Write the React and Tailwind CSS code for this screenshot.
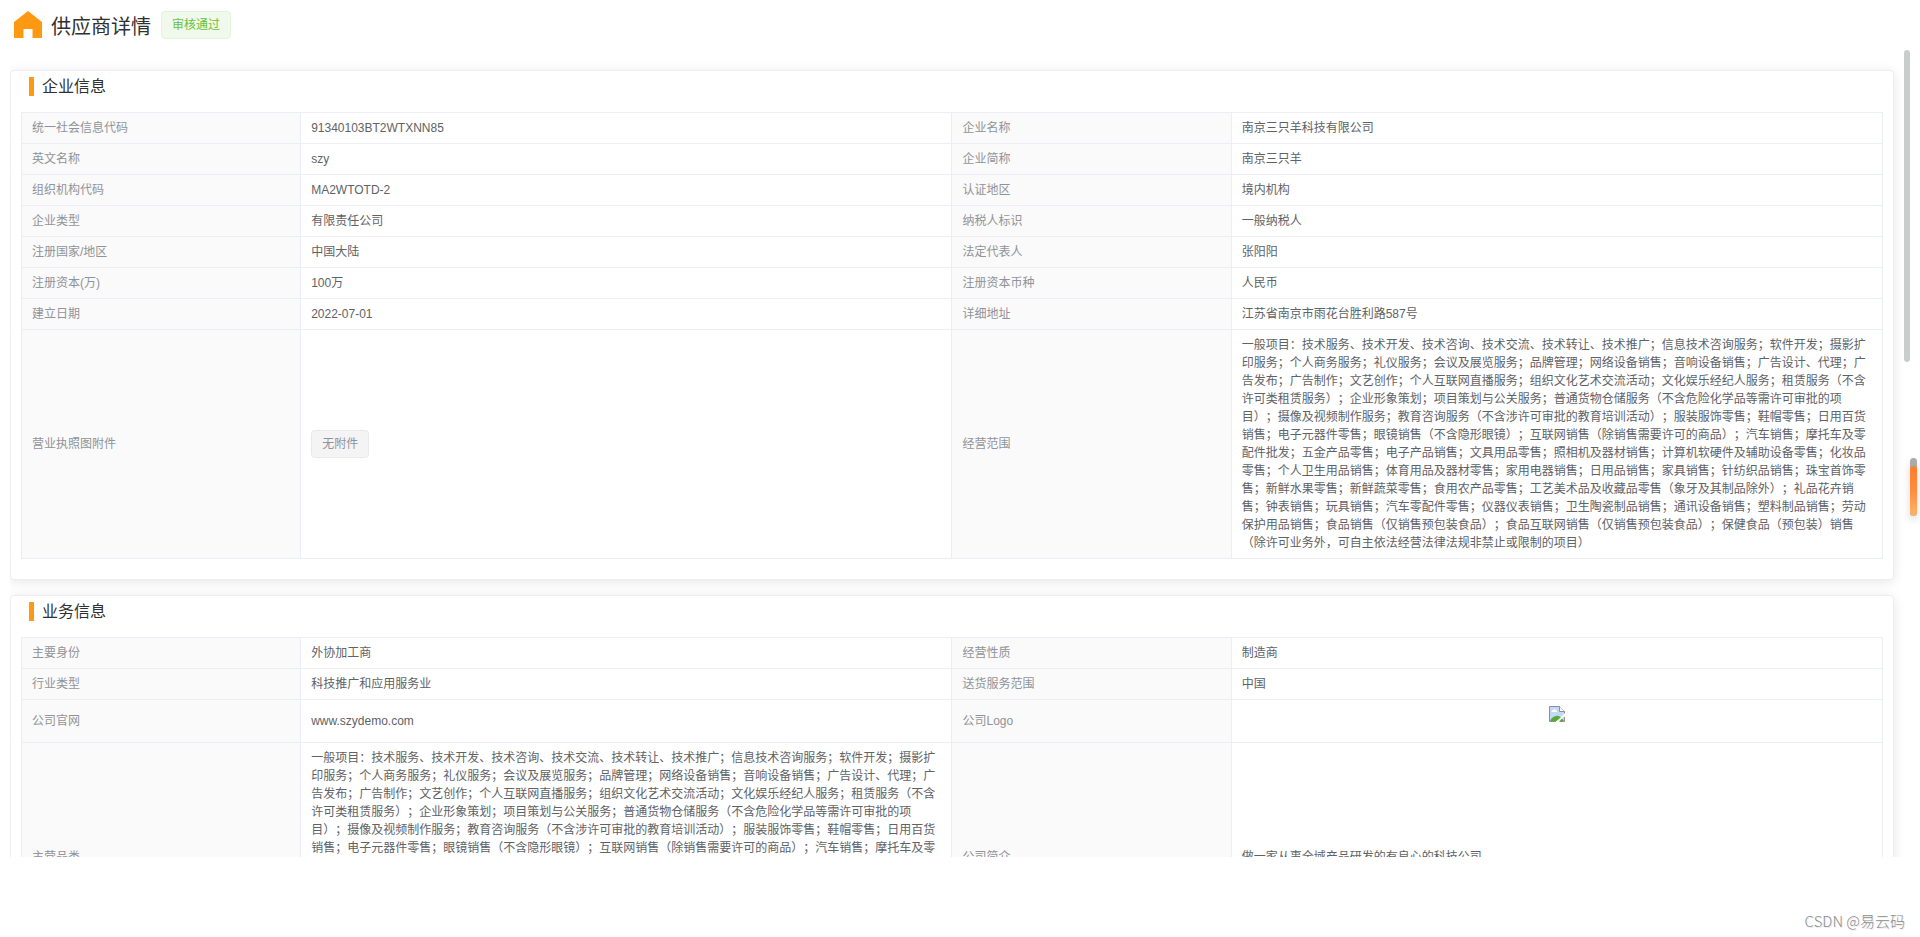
import React from 'react';
import clsx from 'clsx';

const businessScope =
  '一般项目：技术服务、技术开发、技术咨询、技术交流、技术转让、技术推广；信息技术咨询服务；软件开发；摄影扩印服务；个人商务服务；礼仪服务；会议及展览服务；品牌管理；网络设备销售；音响设备销售；广告设计、代理；广告发布；广告制作；文艺创作；个人互联网直播服务；组织文化艺术交流活动；文化娱乐经纪人服务；租赁服务（不含许可类租赁服务）；企业形象策划；项目策划与公关服务；普通货物仓储服务（不含危险化学品等需许可审批的项目）；摄像及视频制作服务；教育咨询服务（不含涉许可审批的教育培训活动）；服装服饰零售；鞋帽零售；日用百货销售；电子元器件零售；眼镜销售（不含隐形眼镜）；互联网销售（除销售需要许可的商品）；汽车销售；摩托车及零配件批发；五金产品零售；电子产品销售；文具用品零售；照相机及器材销售；计算机软硬件及辅助设备零售；化妆品零售；个人卫生用品销售；体育用品及器材零售；家用电器销售；日用品销售；家具销售；针纺织品销售；珠宝首饰零售；新鲜水果零售；新鲜蔬菜零售；食用农产品零售；工艺美术品及收藏品零售（象牙及其制品除外）；礼品花卉销售；钟表销售；玩具销售；汽车零配件零售；仪器仪表销售；卫生陶瓷制品销售；通讯设备销售；塑料制品销售；劳动保护用品销售；食品销售（仅销售预包装食品）；食品互联网销售（仅销售预包装食品）；保健食品（预包装）销售（除许可业务外，可自主依法经营法律法规非禁止或限制的项目）';

const Tag = ({ type = 'info', children }) => (
  <span
    className={clsx(
      'inline-block h-7 rounded border px-2.5 text-xs leading-[26px] align-middle',
      type === 'success'
        ? 'border-[#e1f3d8] bg-[#f0f9eb] text-[#67c23a]'
        : 'border-[#e9e9eb] bg-[#f4f4f5] text-[#909399]'
    )}
  >
    {children}
  </span>
);

const HomeIcon = () => (
  <svg className="h-7 w-7" viewBox="0 0 28 28" fill="#ff9912" aria-hidden="true">
    <path d="M14 0 L28 11 V27 H18.5 V18 H9.5 V27 H0 V11 Z" />
  </svg>
);

const BrokenImage = () => (
  <svg className="h-4 w-4" viewBox="0 0 16 16" role="img" aria-label="公司Logo">
    <path d="M1 1 H10.5 V5.5 H15 V15 H1 Z" fill="#c3d9f7" />
    <path d="M2.5 6 C2.3 4.6 3.6 4.2 4.2 4.4 C4.6 3 6.6 3 7 4.4 C8.2 4.3 8.4 5.4 8 6 Z" fill="#fff" />
    <path d="M1 15 C2.5 12 5 9.8 8 9.8 C10.5 9.8 12.5 11.5 15 15 Z" fill="#56ab35" />
    <path d="M16 7.5 V9.5 L9.5 16 H6.5 Z" fill="#fff" />
    <path d="M0.5 0.5 H10.5 L15.5 5.5 V7.5 M15.5 11 V15.5 H10.5 M7 15.5 H0.5 V0.5" fill="none" stroke="#8f8f8f" />
    <path d="M10.5 0.5 V5.5 H15.5" fill="#fff" stroke="#8f8f8f" />
  </svg>
);

const companyRows = [
  ['统一社会信息代码', '91340103BT2WTXNN85', '企业名称', '南京三只羊科技有限公司'],
  ['英文名称', 'szy', '企业简称', '南京三只羊'],
  ['组织机构代码', 'MA2WTOTD-2', '认证地区', '境内机构'],
  ['企业类型', '有限责任公司', '纳税人标识', '一般纳税人'],
  ['注册国家/地区', '中国大陆', '法定代表人', '张阳阳'],
  ['注册资本(万)', '100万', '注册资本币种', '人民币'],
  ['建立日期', '2022-07-01', '详细地址', '江苏省南京市雨花台胜利路587号'],
  ['营业执照图附件', <Tag>无附件</Tag>, '经营范围', businessScope],
];

const businessRows = [
  ['主要身份', '外协加工商', '经营性质', '制造商'],
  ['行业类型', '科技推广和应用服务业', '送货服务范围', '中国'],
  [
    '公司官网',
    'www.szydemo.com',
    '公司Logo',
    <div className="flex h-[30px] items-start justify-center">
      <BrokenImage />
    </div>,
  ],
  ['主营品类', businessScope, '公司简介', '做一家从事全域产品研发的有良心的科技公司'],
];

const Descriptions = ({ rows }) => (
  <table className="w-full table-fixed border-collapse text-left text-xs leading-[18px]">
    <colgroup>
      <col className="w-[15%]" />
      <col className="w-[35%]" />
      <col className="w-[15%]" />
      <col className="w-[35%]" />
    </colgroup>
    <tbody>
      {rows.map((row) => (
        <tr key={row[0]}>
          {row.map((cell, i) =>
            i % 2 === 0 ? (
              <th
                key={i}
                scope="row"
                className="border border-[#ebeef5] bg-[#fafafa] px-2.5 py-1.5 font-normal text-[#909399]"
              >
                {cell}
              </th>
            ) : (
              <td key={i} className="border border-[#ebeef5] px-2.5 py-1.5 text-[#606266]">
                {cell}
              </td>
            )
          )}
        </tr>
      ))}
    </tbody>
  </table>
);

const Card = ({ title, rows }) => (
  <section className="rounded border border-[#ebeef5] bg-white px-2.5 pt-1.5 pb-5 shadow-[0_2px_12px_0_rgba(0,0,0,0.1)]">
    <div className="mb-4 flex h-[19px] items-center gap-2 pl-2">
      <span className="h-full w-[5px] bg-[#ff9912]" />
      <h2 className="text-base leading-5 text-[#303133]">{title}</h2>
    </div>
    <Descriptions rows={rows} />
  </section>
);

export default function App() {
  return (
    <div className="relative flex h-screen flex-col overflow-hidden bg-white font-['Liberation_Sans','Noto_Sans_CJK_SC',sans-serif] [text-spacing-trim:space-all]">
      <header className="flex h-[50px] shrink-0 items-start pt-[11px] pl-3.5">
        <HomeIcon />
        <h1 className="mr-2.5 ml-[9px] text-xl leading-8 text-[#303133]">供应商详情</h1>
        <Tag type="success">审核通过</Tag>
      </header>

      {/* Scrollable content */}
      <div className="flex min-h-0 flex-1 pr-2.5 pl-2.5">
        <main className="flex min-w-0 flex-1 flex-col gap-[15px] overflow-y-auto pt-5 pr-2.5 [scrollbar-width:none]">
          <Card title="企业信息" rows={companyRows} />
          <Card title="业务信息" rows={businessRows} />
        </main>
        <div className="w-1.5 shrink-0">
          <div className="h-[312px] rounded-full bg-[#cbcdcc]" />
        </div>
      </div>

      <footer className="flex h-20 shrink-0 items-end justify-end pr-[15px] pb-1">
        <span className="font-['Noto_Sans_CJK_SC',sans-serif] text-[15px] leading-6 font-light text-[#8c8c8c] [text-shadow:1px_1px_0_#ececec]">
          CSDN @易云码
        </span>
      </footer>

      {/* Side drawer handle */}
      <div className="absolute top-[458px] right-[3px] h-[58px] w-[7px] overflow-hidden rounded-full bg-[#aaaaaa] pt-2 shadow-[0_4px_8px_rgba(0,0,0,0.15)]">
        <div className="h-full rounded-full bg-linear-to-b from-[#ff7d26] via-[#ff8c40] to-[#ffb469]" />
      </div>
    </div>
  );
}
